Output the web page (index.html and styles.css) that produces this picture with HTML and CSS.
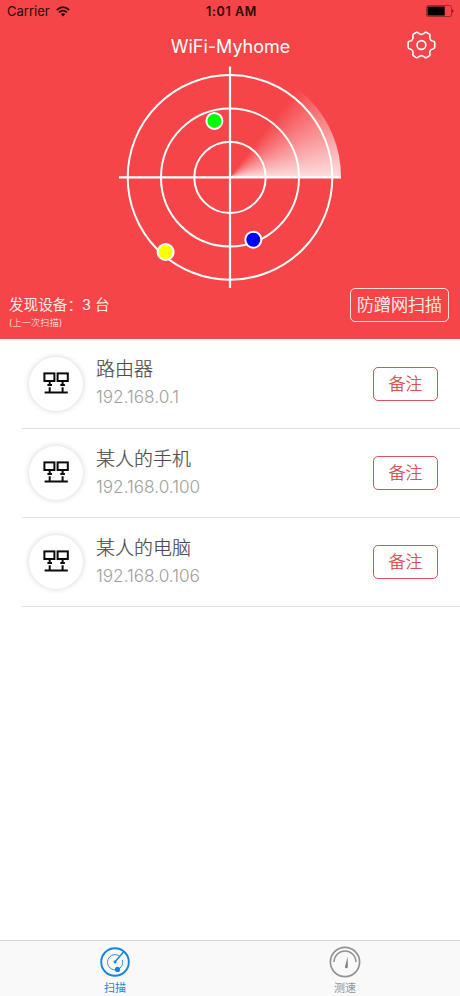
FILE: index.html
```html
<!DOCTYPE html>
<html lang="zh-CN">
<head>
<meta charset="utf-8">
<title>WiFi-Myhome</title>
<link rel="stylesheet" href="styles.css">
</head>
<body>
<svg class="defs" width="0" height="0" aria-hidden="true">
  <symbol id="lan" viewBox="0 0 26 22">
    <g fill="none" stroke="#0a0a0a" stroke-width="2">
      <rect x="1.4" y="1.4" width="10" height="7.6"/>
      <rect x="14.6" y="1.4" width="10.2" height="7.6"/>
      <path d="M6.7 9v3.4M19.6 9v3.4M4.4 12.9h4.6M17.3 12.9h4.6M6.7 15.2v5M19.6 15.2v5M1.6 20.6h23.2"/>
    </g>
  </symbol>
</svg>
<div class="app">
  <header class="hero">
    <div class="status">
      <div class="carrier"><span>Carrier</span>
        <svg width="14" height="11" viewBox="0 0 14 11" fill="none" stroke="#28090a" stroke-width="1.7"><path d="M.8 4Q7-1.6 13.2 4M3 6.4q4-3.5 8 0"/><path d="M4.7 8.1Q7 6.4 9.3 8.1L7 10.4z" fill="#28090a" stroke="none"/></svg>
      </div>
      <div class="time">1:01 AM</div>
      <svg class="battery" width="28" height="12" viewBox="0 0 28 12"><rect x=".5" y=".5" width="25" height="11" rx="1.8" fill="none" stroke="#8e2b2d" stroke-width=".9"/><path d="M1.5 1.5h17.2v9H1.5z" fill="#000"/><path d="M26.4 4.2q2 1.8 0 3.6z" fill="#28090a"/></svg>
    </div>
    <div class="titlebar">
      <h1>WiFi-Myhome</h1>
      <svg class="gear" width="30" height="30" viewBox="-15.4 -15 30 30" fill="none" stroke="#fff" stroke-width="1.6" stroke-linejoin="round"><path d="M-5.2-12.5Q-4-13.1-3-12Q0-9.3 3-12Q4-13.1 5.2-12.5L7.8-11Q8.8-10.4 8.5-9.3C7.8-6 9.3-4 12.2-3.7Q13.2-3.4 13.3-2.3V2.3Q13.2 3.4 12.2 3.7C9.3 4 7.8 6 8.5 9.3Q8.8 10.4 7.8 11L5.2 12.5Q4 13.1 3 12Q0 9.3-3 12Q-4 13.1-5.2 12.5L-7.8 11Q-8.8 10.4-8.5 9.3C-7.8 6-9.3 4-12.2 3.7Q-13.2 3.4-13.3 2.3V-2.3Q-13.2-3.4-12.2-3.7C-9.3-4-7.8-6-8.5-9.3Q-8.8-10.4-7.8-11Z"/><circle r="4.4"/></svg>
    </div>
    <div class="radar">
      <div class="sweep"></div>
      <svg width="222" height="222" viewBox="-111 -111.4 222 222" fill="none" stroke="#fff" stroke-width="2"><circle r="102.3"/><circle r="69"/><circle r="35.7"/><path d="M-111 0H111M0-111V111" stroke-width="2.2"/><circle cx="-15.6" cy="-56.5" r="8" fill="#0f0"/><circle cx="23.3" cy="62.3" r="8" fill="#00f"/><circle cx="-64.4" cy="74.6" r="8" fill="#ff0"/></svg>
    </div>
    <div class="summary">
      <div><p class="found">发现设备：3 台</p><p class="last">(上一次扫描)</p></div>
      <button class="scan">防蹭网扫描</button>
    </div>
  </header>
  <main class="devices">
    <section class="device"><div class="avatar"><svg width="26" height="22"><use href="#lan"/></svg></div><div class="info"><h2>路由器</h2><p>192.168.0.1</p></div><button class="note">备注</button></section>
    <section class="device"><div class="avatar"><svg width="26" height="22"><use href="#lan"/></svg></div><div class="info"><h2>某人的手机</h2><p>192.168.0.100</p></div><button class="note">备注</button></section>
    <section class="device"><div class="avatar"><svg width="26" height="22"><use href="#lan"/></svg></div><div class="info"><h2>某人的电脑</h2><p>192.168.0.106</p></div><button class="note">备注</button></section>
  </main>
  <nav class="tabs">
    <a class="tab active"><svg width="32" height="32" viewBox="-16 -16 32 32" fill="none" stroke="#1584df"><circle r="13.8" stroke-width="1.9"/><path d="M4.8-5.7A7.6 7.6 0 1 0 7.3-2.1" stroke-width=".9"/><path d="M0 0L8.8-10.5" stroke-width="1.4"/><circle r="1.4" fill="#1584df" stroke="none"/><circle cx="2.5" cy="7.4" r="2.6" fill="#1584df" stroke="none"/></svg><span>扫描</span></a>
    <a class="tab"><svg width="32" height="32" viewBox="-16 -16 32 32" fill="none" stroke="#929292"><circle r="14.6" stroke-width="1.7"/><path d="M-11 0A11 11 0 0 1 11 0" stroke-width="1.4"/><path d="M2.7-5.4L2.9 5.2Q1.4 7.3-.2 5.2z" fill="#858585" stroke="none"/></svg><span>测速</span></a>
  </nav>
</div>
</body>
</html>
```
FILE: styles.css
```css
* { box-sizing: border-box; margin: 0; padding: 0; }
body { width: 460px; height: 996px; background: #fff; font-family: Inter, "Noto Sans CJK SC", sans-serif; }
.defs { position: absolute; }
.app { display: flex; flex-direction: column; height: 996px; overflow: hidden; }
.hero { height: 339px; background: #f54548; color: #fff; display: flex; flex-direction: column; flex: none; }
.status { height: 23px; display: grid; grid-template-columns: 1fr auto 1fr; align-items: center; padding: 0 6px 0 7px; color: #28090a; font-size: 13px; line-height: 23px; }
.carrier { display: flex; align-items: center; gap: 6px; }
.time { font-weight: 600; font-size: 12.5px; letter-spacing: .6px; padding-left: 2px; }
.battery { justify-self: end; margin-top: -1px; }
.titlebar { height: 43px; display: grid; grid-template-columns: 1fr auto 1fr; grid-template-areas: ". title gear"; align-items: center; }
.titlebar h1 { grid-area: title; font-size: 18px; font-weight: 400; line-height: 24px; padding: 4px 0 0 1px; }
.gear { grid-area: gear; justify-self: end; margin-right: 24px; }
.radar { width: 222px; height: 222px; margin: 0 auto; display: grid; flex: none; }
.radar > * { grid-area: 1 / 1; }
.radar svg { display: block; }
.sweep { border-radius: 50%; background: conic-gradient(from 37deg, rgba(255,255,255,0), rgba(255,255,255,.82) 53deg, transparent 53deg); }
.summary { display: flex; justify-content: space-between; padding: 0 11px 0 9px; height: 51px; }
.found { font-size: 14.6px; line-height: 22px; padding-top: 6px; font-weight: 300; -webkit-text-stroke: .2px; }
.last { font-size: 9px; line-height: 13px; font-weight: 300; letter-spacing: .3px; }
button { font-family: inherit; font-weight: 300; background: transparent; -webkit-text-stroke: .2px; }
.scan { width: 99px; height: 34px; border: 1px solid #ffe3e3; border-radius: 5px; color: #fff; font-size: 17px; line-height: 30px; white-space: nowrap; }
.devices { padding-left: 22px; flex: 1; }
.device { height: 89px; border-bottom: 1px solid #e1e1e1; padding: 0 22px 0 7px; display: flex; align-items: center; }
.device:first-child { height: 90px; }
.avatar { width: 54px; height: 54px; border-radius: 50%; box-shadow: 0 0 5px 1px #dedede; display: grid; place-items: center; flex: none; padding-bottom: 2px; }
.info { flex: 1; padding-left: 13px; }
.info h2 { font-size: 19px; line-height: 28px; font-weight: 300; color: #4c4c4c; -webkit-text-stroke: .2px; }
.info p { font-size: 17.2px; line-height: 26px; color: #a0a0a0; font-weight: 300; padding-bottom: 1px; }
.note { width: 65px; height: 34px; border: 1px solid #da5356; border-radius: 5px; color: #d93c40; font-size: 17px; line-height: 31px; padding-top: 1px; }
.tabs { height: 56px; flex: none; background: #f9f9f9; border-top: 1px solid #d3d3d3; display: grid; grid-template-columns: 1fr 1fr; }
.tab { display: flex; flex-direction: column; align-items: center; padding-top: 5px; color: #929292; font-size: 11px; line-height: 20px; }
.active { color: #1584df; }
```
